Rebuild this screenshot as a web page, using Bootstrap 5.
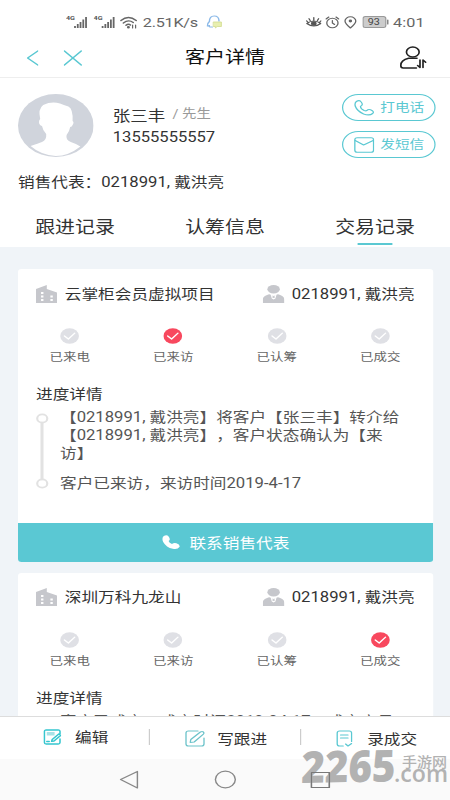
<!DOCTYPE html>
<html lang="zh-CN">
<head>
<meta charset="utf-8">
<meta name="viewport" content="width=device-width, initial-scale=1">
<title>客户详情</title>
<link href="https://cdn.jsdelivr.net/npm/bootstrap@5.3.0/dist/css/bootstrap.min.css" rel="stylesheet">
<style>
html,body{height:800px;overflow:hidden}
body{width:450px;font-family:Roboto,"Noto Sans CJK SC",sans-serif;font-size:13.88px;line-height:18px;color:#333;background:#fff;text-spacing-trim:space-all}
svg{display:block;flex:none;fill:none;stroke-linecap:round;stroke-linejoin:round}
svg text{stroke:none}
/* 375-unit wide phone canvas, widened to fill the window */
.phone{width:375px;height:800px;transform:scaleX(1.2);transform-origin:0 0}
.teal{color:#5ac8d2}
.statusbar{height:38px;padding:6px 21px 0 55px;color:#666}
.net{font-size:13.5px;letter-spacing:-.2px}
.clock{letter-spacing:.1px}
.topbar{height:40px;padding:0 19px 0 22px;border-bottom:1px solid #eee}
.topbar h1{font-size:16.7px;line-height:24px;color:#111;margin:0 3px 0 0}
.side{width:60px}
.cross{margin-left:21px}
.profile{height:121px;padding:16px 12.500px 0 15px}
.who{font-size:14.6px;line-height:22px}
.sex{font-size:12px;color:#999;margin-left:6px}
.ident{padding-top:9px}
.phoneno{margin-top:-1px;font-size:13.8px}
.pills{gap:10px}
.pill{width:78px;height:27px;border:1px solid #5ac8d2;border-radius:14px;font-size:12.2px;line-height:20px;padding:0 8px 0 9px}
.rep{margin-top:15px}
.tabs{height:48px;font-size:16.6px}
.tabs .tab{position:relative;line-height:24px;padding-top:17px}
.tabs .on::after{content:"";display:block;width:29px;height:2px;margin:3px auto 0;background:#5ac8d2}
.feed{height:469px;background:#f0f4f8;padding:22px 14px 0 15px}
.panel{border-radius:3px;background:#fff;overflow:hidden}
.phead{height:49px;padding:0 15.500px 0 15px}
.pname{margin-left:6px}
.steps{height:57px;padding-top:10px;padding-right:1px;font-size:11.2px;color:#666}
.steps .dot{color:#dfe0e5}
.steps .hit{color:#f8485e}
.steps .dot{margin-bottom:5px}
.ptitle{padding:10px 15px 0 15px;height:38px}
.log{padding-left:15px;color:#555;margin-top:-5px}
.rail{width:11px;margin-right:9px}
.visit{margin-top:12px}
.call{height:39px;background:#5ac8d3;color:#fff;margin-top:31px}
.gap11{margin-top:10.500px}
.actions{height:43px;border-top:1px solid #ddd;background:#fff}
.act1{width:124px;padding:0 0 3px 35.500px}
.act2{width:125px;padding:1px 0 0 29px}
.act3{padding:1px 0 0 29px}
.rule{width:1px;height:16px;background:#ccc;margin-bottom:2px}
.sysnav{height:41px;background:#fafafa}
.mark-layer{position:absolute;left:0;top:740px;opacity:.92}
</style>
<script src="https://cdn.jsdelivr.net/npm/bootstrap@5.3.0/dist/js/bootstrap.bundle.min.js"></script>
</head>
<body>
<svg width="0" height="0" class="position-absolute">
<defs>
<symbol id="tower" viewBox="0 0 18 18"><path d="M0 4L9 0V4L17.500 7.500V18H0Z" fill="#c6c7cc"/><path fill="#fff" d="M4.200 7h2v2h-2zm0 3.500h2v2h-2zm0 3.500h2v2h-2zM12 10.500h2v2h-2zm0 3.500h2v2h-2z"/></symbol>
<symbol id="agent" viewBox="0 0 18 18"><ellipse cx="9" cy="4.200" rx="5.200" ry="4.200" fill="#c6c7cc"/><path d="M0 18V15C0 11 3 10 5.500 9.200L9 11L12.500 9.200C15 10 18 11 18 15V18Z" fill="#c6c7cc"/><path d="M6.500 9.500L7.500 13.500L9 14.500L10.500 13.500L11.500 9.500L9 11Z" fill="#fff"/><circle cx="9" cy="12" r="1.100" fill="#c6c7cc"/></symbol>
<symbol id="tick" viewBox="0 0 16 16"><circle cx="8" cy="8" r="7.800" fill="currentColor"/><path d="M3.700 8L7 11L12.300 5.200" stroke="#fff" stroke-width="1.200"/></symbol>
<symbol id="bars" viewBox="0 0 19 14"><text x="0" y="5.500" font-size="6" font-weight="700" fill="#555" font-family="Roboto">4G</text><path d="M7.500 13v-2M9.800 13V9M12.100 13V7M14.400 13V4.500M16.700 13V2" stroke="#666" stroke-width="1.500" stroke-linecap="butt"/></symbol>
</defs>
</svg>
<div class="phone d-flex flex-column position-relative">
  <div class="statusbar d-flex align-items-center">
    <svg width="19" height="14"><use href="#bars"/></svg>
    <svg class="ms-1" width="19" height="14"><use href="#bars"/></svg>
    <svg style="margin-left:3px" width="15" height="13" viewBox="0 0 15 13" stroke="#666" stroke-width="1.300"><path d="M.8 4.500Q7 -1.500 13.500 4.500M2.800 7Q7 3 11 6.500M5 9.300Q7 7.300 8.700 9"/><circle cx="7" cy="11.200" r=".6" fill="#666"/><path d="M10.500 9v3M13 12V9" stroke-width="1"/></svg>
    <span class="net" style="margin-left:4px">2.51K/s</span>
    <svg style="margin-left:7px" width="13" height="14" viewBox="0 0 13 14"><path d="M5 12H3Q2 12 2.500 10.500L.8 11Q.5 8.500 2.500 6.500Q2.500 1 6.500 1Q10.500 1 10.500 6" stroke="#8bb9e8" stroke-width="1.200"/><path d="M6 7h6.500v4.500H9L7.500 13V11.500H6Z" fill="#e8efb0" stroke="#cfd98a" stroke-width=".7"/></svg>
    <div class="ms-auto d-flex align-items-center">
      <svg width="13" height="13" viewBox="0 0 13 13" stroke="#555" stroke-width="1.100"><path d="M.7 7.500Q6.500 2.500 12.300 7.500Q6.500 12.500 .7 7.500ZM6.500 4V1.500M3.500 4.500L2.500 2.700M9.500 4.500L10.500 2.700M1.500 6L.5 4.800M11.500 6L12.500 4.800"/><circle cx="6.500" cy="7.500" r="1.800" fill="#555"/></svg>
      <svg style="margin-left:3px" width="12" height="13" viewBox="0 0 12 13" stroke="#666" stroke-width="1.100"><circle cx="6" cy="7" r="4.700"/><path d="M6 4.500V7L7.800 8.500M.7 3L3 1M11.300 3L9 1"/></svg>
      <svg style="margin-left:3px" width="12" height="13" viewBox="0 0 12 13" stroke="#666" stroke-width="1.100"><path d="M6 12Q1.500 7.500 1.500 5A4.500 4.200 0 0 1 10.500 5Q10.500 7.500 6 12Z"/><circle cx="6" cy="5" r=".9" fill="#555"/></svg>
      <svg class="ms-1" width="22" height="12" viewBox="0 0 22 12"><rect x=".5" y=".5" width="19" height="11" rx="2" fill="#ccc" stroke="#999"/><path d="M21.200 4v4" stroke="#777" stroke-width="1.200"/><text x="4.500" y="9.300" font-size="9" fill="#444" font-family="Roboto">93</text></svg>
      <span class="net clock ms-1">4:01</span>
    </div>
  </div>

  <header class="topbar d-flex align-items-center justify-content-between">
    <div class="side d-flex align-items-center teal">
      <svg width="10" height="16" viewBox="0 0 10 16" stroke="currentColor" stroke-width="1.200"><path d="M9.500 1L1 8L9.500 15"/></svg>
      <svg width="16" height="16" viewBox="0 0 16 16" class="cross" stroke="currentColor" stroke-width="1.300"><path d="M.7 1L14.700 15M14.700 1L.7 15"/></svg>
    </div>
    <h1 class="fw-normal">客户详情</h1>
    <div class="side d-flex justify-content-end">
      <svg width="23" height="24" viewBox="0 0 23 24" stroke="#222" stroke-width="1.400"><ellipse cx="11" cy="6" rx="5.300" ry="5"/><path d="M7.500 12.300Q1 14 1 19.500Q1 22 3 22H14M7.500 12.300H14.500"/><path d="M17 14V21.500L15 19.500M19.500 21.500V14L21.700 16.200"/></svg>
    </div>
  </header>

  <section class="profile d-flex flex-column">
    <div class="d-flex">
      <svg width="63" height="63" viewBox="0 0 63 63"><circle cx="31.500" cy="31.500" r="31.500" fill="#d0d4dc"/><path d="M10.500 52Q17 49.500 20 48Q24 46 23.500 40Q20.500 36 20 32Q17.500 31 17.500 28Q17.500 26 18.500 25Q16.500 15 21 11Q28 7 35 9.500Q38 11 42 12.500Q46 15 45.500 27Q47 28 45.500 31Q45 33 43.500 33Q43 37 40.500 41Q39.500 46 44 48Q49 50 52 52.500Q42 62 31.500 62Q19 61 10.500 52Z" fill="#fff"/></svg>
      <div class="ident ms-3">
        <div class="who d-flex align-items-center">张三丰<span class="sex pb-1">/ 先生</span></div>
        <div class="phoneno">13555555557</div>
      </div>
      <div class="pills ms-auto d-flex flex-column teal">
        <div class="pill d-flex align-items-center justify-content-between">
          <svg width="17" height="16" viewBox="0 0 17 16" stroke="currentColor" stroke-width="1.100"><path d="M2 1.500Q4.500 -.5 6 2Q8 5 5.500 6.200Q5 8.500 8.500 10.500Q10.500 11.500 11.500 9.800Q13 9 15 10.500Q17 12 15.500 13.500Q13 16 8 14Q2.500 11 1 6Q.4 3 2 1.500Z"/></svg>打电话</div>
        <div class="pill d-flex align-items-center justify-content-between">
          <svg width="17" height="16" viewBox="0 0 17 16" stroke="currentColor" stroke-width="1.100"><rect x=".7" y=".7" width="15.600" height="14.600" rx="2"/><path d="M1 3.500L8 8L16 3.500"/></svg>发短信</div>
      </div>
    </div>
    <div class="rep">销售代表：0218991, 戴洪亮</div>
  </section>

  <nav class="tabs row g-0 text-center">
    <div class="col tab">跟进记录</div><div class="col tab">认筹信息</div><div class="col tab on">交易记录</div>
  </nav>

  <main class="feed overflow-hidden">
    <article class="panel">
      <div class="phead d-flex align-items-center"><svg width="18" height="18"><use href="#tower"/></svg><span class="pname">云掌柜会员虚拟项目</span><svg class="ms-auto" width="18" height="18"><use href="#agent"/></svg><span class="pname">0218991, 戴洪亮</span></div>
      <div class="steps row g-0 text-center">
        <div class="col"><svg class="dot mx-auto" width="16" height="16"><use href="#tick"/></svg>已来电</div>
        <div class="col"><svg class="dot hit mx-auto" width="16" height="16"><use href="#tick"/></svg>已来访</div>
        <div class="col"><svg class="dot mx-auto" width="16" height="16"><use href="#tick"/></svg>已认筹</div>
        <div class="col"><svg class="dot mx-auto" width="16" height="16"><use href="#tick"/></svg>已成交</div>
      </div>
      <div class="ptitle">进度详情</div>
      <div class="log d-flex">
        <svg class="rail" width="11" height="84" viewBox="0 0 11 84" stroke="#e2e2e2" stroke-width="1.800"><path d="M5 15V71" stroke-width="2.500"/><circle cx="5.200" cy="10.500" r="4.200"/><circle cx="5.200" cy="75.500" r="4.200"/></svg>
        <div class="text-nowrap">【0218991, 戴洪亮】将客户【张三丰】转介给<br>【0218991, 戴洪亮】，客户状态确认为【来<br>访】<div class="visit">客户已来访，来访时间2019-4-17</div></div>
      </div>
      <div class="call d-flex align-items-center justify-content-center"><svg width="15" height="15" viewBox="0 0 15 15" class="me-2"><path d="M1.500 1Q4 -.8 5.500 1.500Q7.500 4.500 5.500 6Q6 8 8.300 9Q10 7.500 12 8.300Q15.500 10 14.500 12Q13 14.800 9 13.800Q3.500 12.500 1 7Q-.5 3 1.500 1Z" fill="#fff"/></svg>联系销售代表</div>
    </article>
    <article class="panel gap11">
      <div class="phead d-flex align-items-center"><svg width="18" height="18"><use href="#tower"/></svg><span class="pname">深圳万科九龙山</span><svg class="ms-auto" width="18" height="18"><use href="#agent"/></svg><span class="pname">0218991, 戴洪亮</span></div>
      <div class="steps row g-0 text-center">
        <div class="col"><svg class="dot mx-auto" width="16" height="16"><use href="#tick"/></svg>已来电</div>
        <div class="col"><svg class="dot mx-auto" width="16" height="16"><use href="#tick"/></svg>已来访</div>
        <div class="col"><svg class="dot mx-auto" width="16" height="16"><use href="#tick"/></svg>已认筹</div>
        <div class="col"><svg class="dot hit mx-auto" width="16" height="16"><use href="#tick"/></svg>已成交</div>
      </div>
      <div class="ptitle">进度详情</div>
      <div class="log d-flex"><div class="rail"></div><div class="text-nowrap">客户已成交，成交时间2019-04-17，成交房号</div></div>
    </article>
  </main>

  <footer class="actions d-flex align-items-center">
    <div class="act1 d-flex align-items-center">
      <svg width="15" height="16" viewBox="0 0 15 16" stroke="#35c6cf" stroke-width="1.300"><path d="M14 5V2.500Q14 1 12.500 1H2.500Q1 1 1 2.500V13.500Q1 15 2.500 15H12.500Q14 15 14 13.500V10M7.500 10.500L13 5L14.500 6.500L9 12L7 12.300ZM3 12.500H5"/><path d="M3 3h6.500v3.500H3z" fill="#a7e2e6" stroke="none"/></svg><span class="ms-2" style="padding-left:4px">编辑</span></div>
    <div class="rule"></div>
    <div class="act2 d-flex align-items-center">
      <svg width="17" height="17" viewBox="0 0 17 17" stroke="#6cc3ca" stroke-width="1.100"><path d="M11 1H3Q1 1 1 3V14Q1 16 3 16H14Q16 16 16 14V8M5 9.500L13 2Q14.500 1 15.500 2Q16.500 3 15.500 4.200L7.800 12L4.500 12.500Z"/></svg><span style="margin-left:10px">写跟进</span></div>
    <div class="rule"></div>
    <div class="act3 d-flex align-items-center">
      <svg width="14" height="17" viewBox="0 0 14 17" stroke="#5ac8d2" stroke-width="1.100"><path d="M6 16H3Q1 16 1 14V3Q1 1 3 1H11Q13 1 13 3V11.500M3.800 5H10M3.800 8H10M8 14L10 16L13 13.500"/></svg><span style="margin-left:12px">录成交</span></div>
  </footer>

  <div class="sysnav d-flex align-items-center">
    <svg width="375" height="20" viewBox="0 0 375 20" stroke="#888" stroke-width="1.200"><path d="M100.500 9.500L114.500 1.500V18Z"/><circle cx="187.800" cy="9.500" r="8.300"/><path d="M259.500 2.500h14.800v15h-14.800z"/></svg>
  </div>
</div>
<svg class="mark-layer" width="450" height="60" viewBox="0 0 450 60">
  <g fill="#acacac" font-family="'Open Sans',sans-serif">
    <text transform="translate(301 43) rotate(-1) skewX(-3)" font-size="44" font-weight="800" textLength="94" lengthAdjust="spacingAndGlyphs">2265</text>
    <text x="394" y="42" font-size="24" font-weight="600" textLength="54" lengthAdjust="spacingAndGlyphs">.com</text>
    <text x="402" y="26.500" font-size="13.500" font-weight="500" font-family="'Noto Sans CJK SC'" textLength="45" lengthAdjust="spacingAndGlyphs">手游网</text>
  </g>
  <path d="M311.500 32.500h18v15h-18z" stroke="#777" stroke-width="1.200"/>
</svg>
</body>
</html>
